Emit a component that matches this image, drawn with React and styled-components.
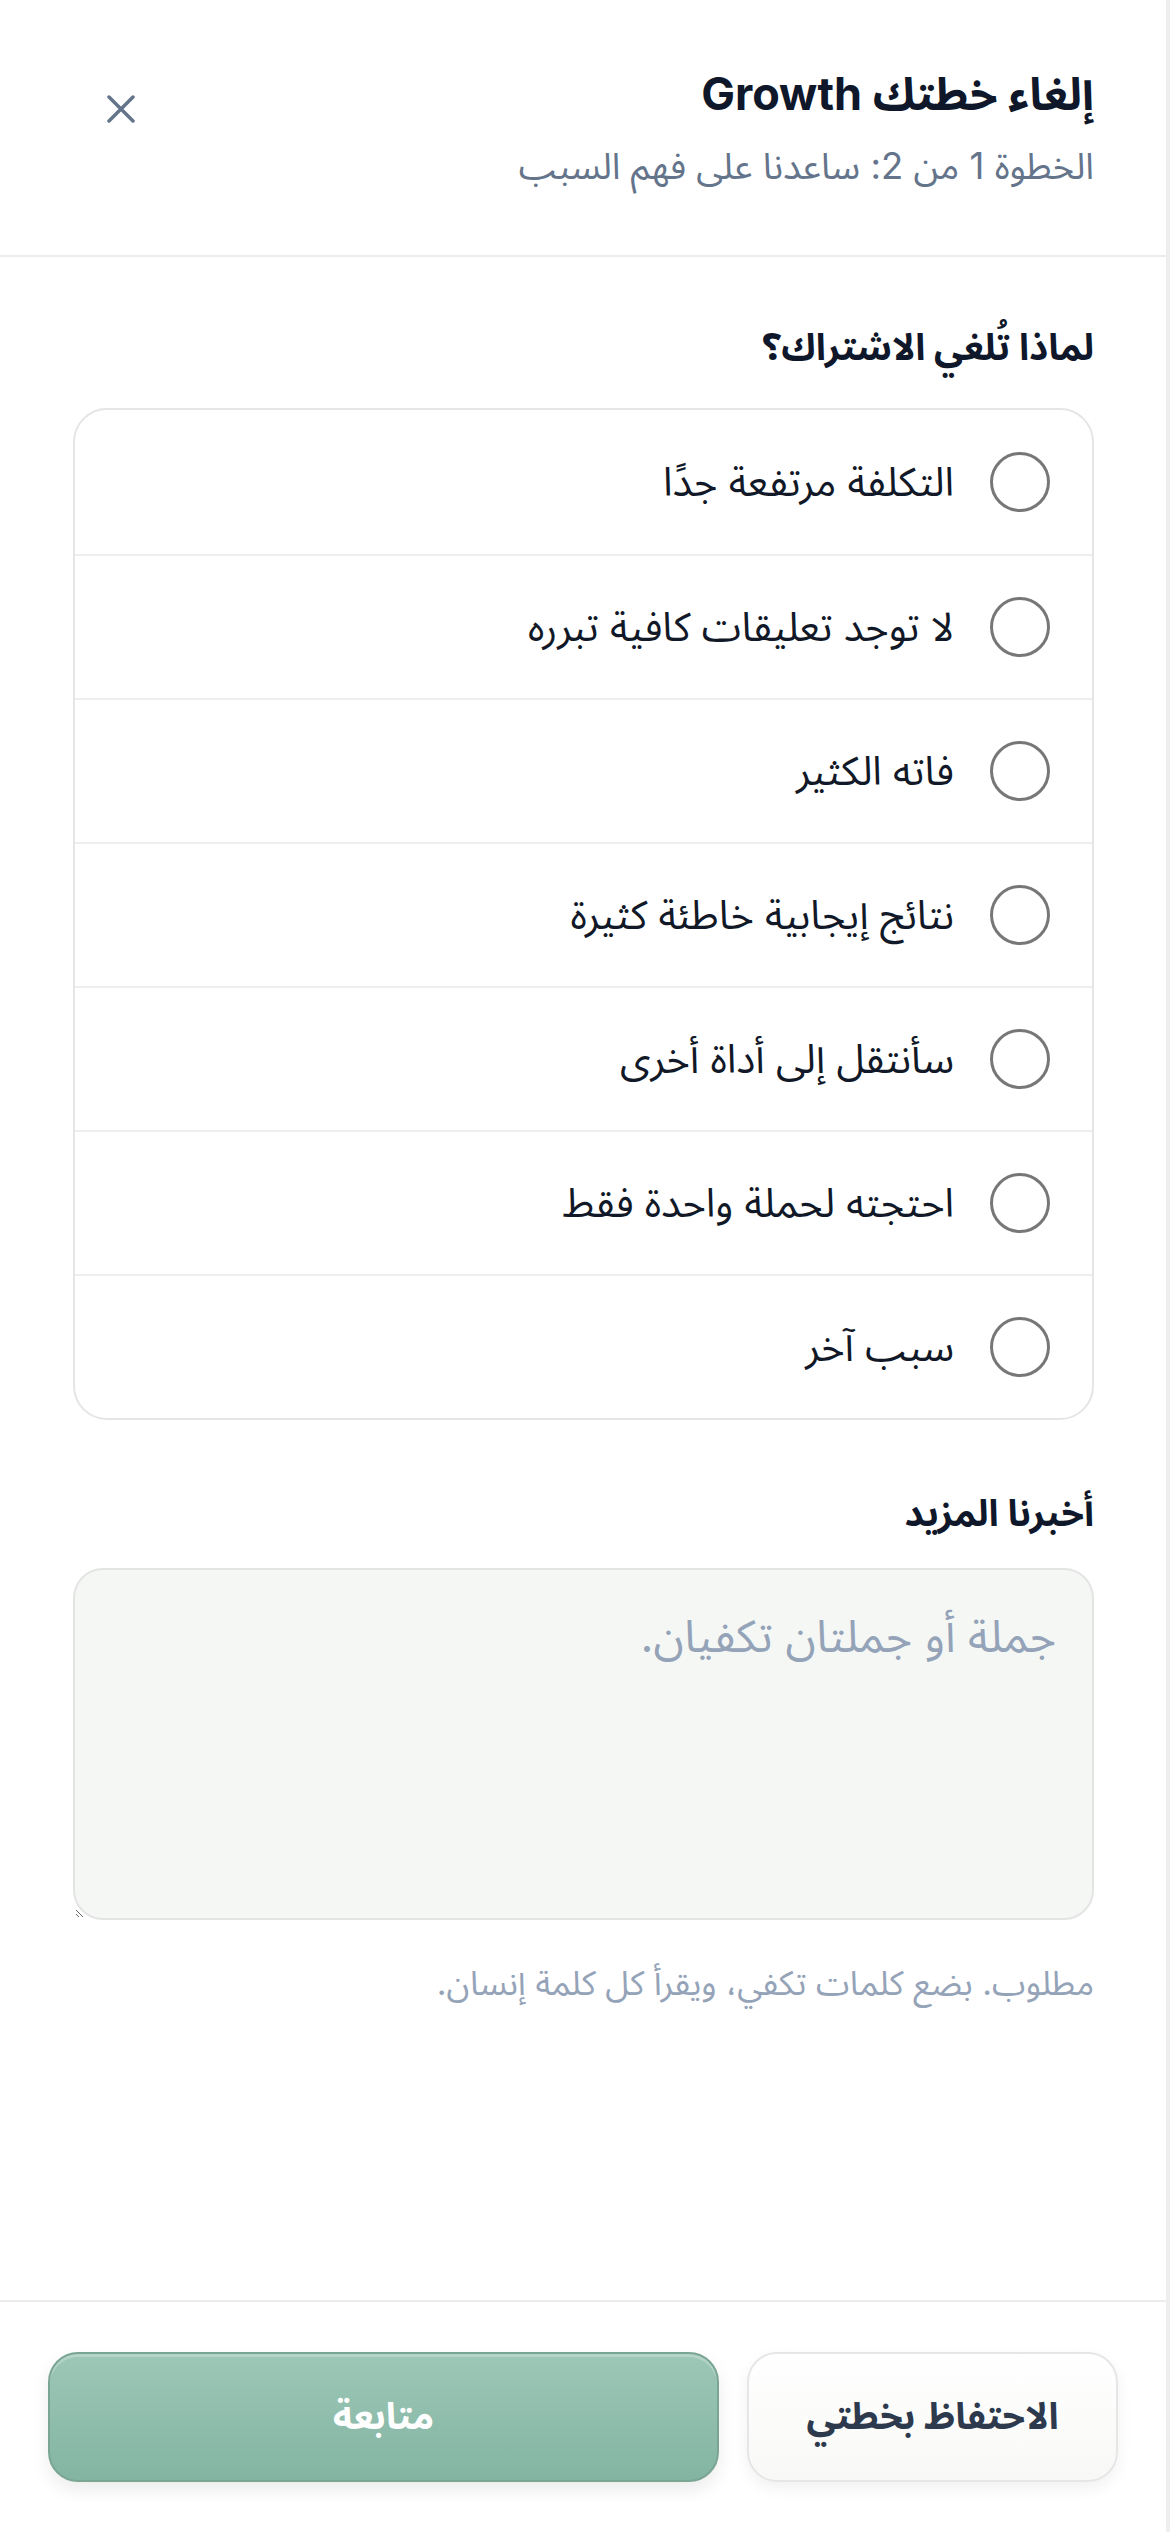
import React from "react";
import styled, { createGlobalStyle } from "styled-components";

const GlobalStyle = createGlobalStyle`
  html, body {
    margin: 0;
    padding: 0;
    background: #ffffff;
  }
  body {
    font-family: "Inter", "Noto Sans Arabic", sans-serif;
    color: #111827;
  }
  * {
    box-sizing: border-box;
  }
`;

const Sheet = styled.div`
  direction: rtl;
  min-height: 100vh;
  display: flex;
  flex-direction: column;
  background: #ffffff;
  border-right: 4px solid #eeeeee;
`;

const Header = styled.header`
  display: flex;
  align-items: flex-start;
  justify-content: space-between;
  padding: 64px 72px 62px 93px;
  border-bottom: 2px solid #ededed;
`;

const TitleBlock = styled.div`
  display: flex;
  flex-direction: column;
  gap: 16px;
`;

const Title = styled.h1`
  margin: 0;
  font-size: 45px;
  line-height: 60px;
  font-weight: 700;
  color: #0f172a;
`;

const Subtitle = styled.p`
  margin: 0;
  font-size: 36.5px;
  line-height: 53px;
  color: #64748b;
`;

const CloseButton = styled.button`
  width: 56px;
  height: 56px;
  margin-top: 17px;
  padding: 0;
  border: none;
  background: transparent;
  display: flex;
  align-items: center;
  justify-content: center;
  color: #64748b;
  cursor: pointer;
`;

const Body = styled.main`
  flex: 1;
  padding: 60px 72px 0 73px;
  display: flex;
  flex-direction: column;
`;

const Label = styled.h2`
  margin: 0 0 ${(p) => p.$gap || 31}px;
  font-size: 37px;
  line-height: 60px;
  font-weight: 700;
  color: #0f172a;
`;

const Options = styled.div`
  border: 2px solid #e5e5e5;
  border-radius: 34px;
  overflow: hidden;
  margin-bottom: 63px;
`;

const Option = styled.label`
  display: flex;
  align-items: center;
  gap: 36px;
  height: 144px;
  padding: 0 42px;
  cursor: pointer;
  & + & {
    border-top: 2px solid #eeeeee;
  }
`;

const Radio = styled.span`
  flex: 0 0 60px;
  width: 60px;
  height: 60px;
  border-radius: 50%;
  border: 3px solid #777777;
  background: #ffffff;
`;

const OptionText = styled.span`
  font-size: 40px;
  line-height: 60px;
  color: #111827;
`;

const TextArea = styled.textarea`
  display: block;
  width: 100%;
  height: 352px;
  padding: 30px 36px;
  border: 2px solid #e4e4e4;
  border-radius: 30px;
  background: #f5f7f5;
  font-family: inherit;
  font-size: 45px;
  line-height: 72px;
  color: #111827;
  outline: none;
  &::placeholder {
    color: #94a3b8;
  }
`;

const Hint = styled.p`
  margin: 36px 0 0;
  font-size: 34px;
  line-height: 54px;
  color: #94a3b8;
`;

const Footer = styled.footer`
  display: flex;
  gap: 28px;
  padding: 50px 48px 50px 48px;
  border-top: 2px solid #ededed;
`;

const Button = styled.button`
  height: 130px;
  border-radius: 30px;
  font-family: inherit;
  font-size: 37px;
  font-weight: 700;
  cursor: pointer;
  flex: ${(p) => (p.$primary ? "1" : "0 0 371px")};
  color: ${(p) => (p.$primary ? "#ffffff" : "#2d3a4d")};
  border: 2px solid ${(p) => (p.$primary ? "#7ba593" : "#e6e6e6")};
  background: ${(p) =>
    p.$primary
      ? "linear-gradient(180deg, #9dc7b7 0%, #83b4a2 100%)"
      : "linear-gradient(180deg, #ffffff 0%, #f8f8f6 100%)"};
  box-shadow: ${(p) =>
    p.$primary
      ? "inset 0 3px 0 rgba(255,255,255,0.25), 0 8px 18px rgba(0,0,0,0.08)"
      : "0 6px 16px rgba(0,0,0,0.06)"};
`;

const reasons = [
  "التكلفة مرتفعة جدًا",
  "لا توجد تعليقات كافية تبرره",
  "فاته الكثير",
  "نتائج إيجابية خاطئة كثيرة",
  "سأنتقل إلى أداة أخرى",
  "احتجته لحملة واحدة فقط",
  "سبب آخر",
];

export default function App() {
  return (
    <>
      <GlobalStyle />
      <Sheet>
        <Header>
          <TitleBlock>
            <Title>إلغاء خطتك Growth</Title>
            <Subtitle>الخطوة 1 من 2: ساعدنا على فهم السبب</Subtitle>
          </TitleBlock>
          <CloseButton aria-label="إغلاق">
            <svg width="28" height="28" viewBox="0 0 28 28" fill="none">
              <path
                d="M2 2L26 26M26 2L2 26"
                stroke="currentColor"
                strokeWidth="3.5"
                strokeLinecap="round"
              />
            </svg>
          </CloseButton>
        </Header>

        <Body>
          <Label>لماذا تُلغي الاشتراك؟</Label>
          <Options>
            {reasons.map((r) => (
              <Option key={r}>
                <Radio />
                <OptionText>{r}</OptionText>
              </Option>
            ))}
          </Options>

          <Label $gap={25}>أخبرنا المزيد</Label>
          <TextArea placeholder="جملة أو جملتان تكفيان." />
          <Hint>مطلوب. بضع كلمات تكفي، ويقرأ كل كلمة إنسان.</Hint>
        </Body>

        <Footer>
          <Button>الاحتفاظ بخطتي</Button>
          <Button $primary>متابعة</Button>
        </Footer>
      </Sheet>
    </>
  );
}
